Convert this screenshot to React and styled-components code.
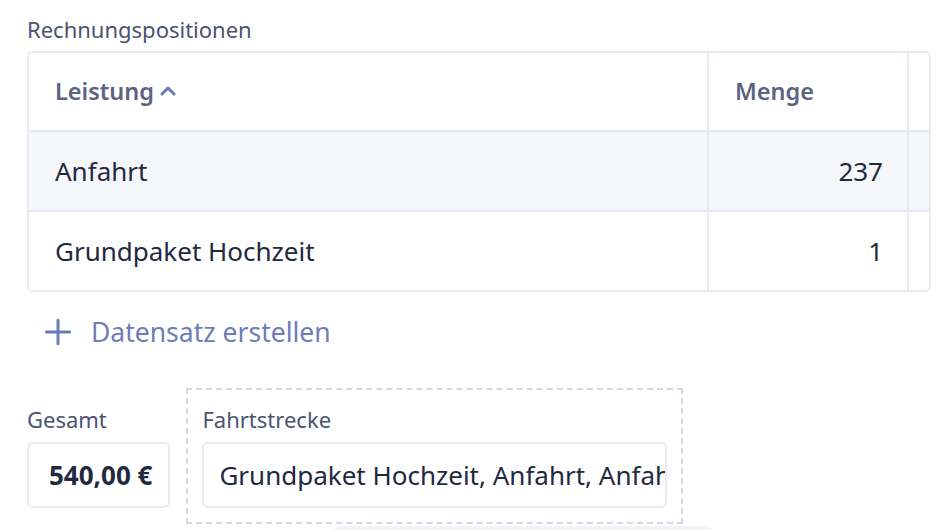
import React from 'react'
import styled, { createGlobalStyle } from 'styled-components'
import { Plus, ChevronUp } from 'lucide-react'

const GlobalStyle = createGlobalStyle`
    html, body {
        margin: 0;
        padding: 0;
        background: #ffffff;
    }
    body {
        font-family: "Noto Sans", "Open Sans", sans-serif;
        color: #1f2940;
        overflow: hidden;
    }
`

const Page = styled.div`
    padding: 14px 17px 0 27px;
    display: flex;
    flex-direction: column;
`

const FieldLabel = styled.div`
    font-size: 22px;
    line-height: 30px;
    color: #4b5371;
    margin-bottom: ${(p) => p.gap || 7}px;
`

const Table = styled.div`
    display: grid;
    grid-template-columns: 680px 200px 1fr;
    border: 2px solid #e8eaf3;
    border-radius: 6px;
    overflow: hidden;
`

const Cell = styled.div`
    box-sizing: border-box;
    height: ${(p) => (p.bottom ? 78 : 80)}px;
    display: flex;
    align-items: center;
    justify-content: ${(p) => (p.right ? 'flex-end' : 'flex-start')};
    padding: 0 24px 0 26px;
    font-size: 26px;
    color: #1f2940;
    background: ${(p) => (p.shaded ? '#f6f7fb' : '#ffffff')};
    border-right: ${(p) => (p.last ? 'none' : '2px solid #e8eaf3')};
    border-bottom: ${(p) => (p.bottom ? 'none' : '2px solid #e8eaf3')};
`

const HeadCell = styled(Cell)`
    height: 79px;
    font-size: 23.5px;
    font-weight: 600;
    color: #5b6380;
    gap: 2px;
    padding-bottom: 2px;
`

const SortIcon = styled(ChevronUp)`
    color: #6b7ab6;
    margin-top: 1px;
`

const AddButton = styled.button`
    align-self: flex-start;
    display: flex;
    align-items: center;
    gap: 13px;
    margin: 10px 0 0 11px;
    padding: 0;
    height: 60px;
    border: none;
    background: none;
    font-family: inherit;
    font-size: 26.5px;
    color: #6e7db8;
    cursor: pointer;
`

const FormRow = styled.div`
    display: flex;
    align-items: center;
    gap: 16px;
    margin-top: 26px;
`

const Field = styled.div`
    display: flex;
    flex-direction: column;
`

const DashedField = styled(Field)`
    border: 2px dashed #d3d7e5;
    padding: 14px;
    width: 465px;
`

const ValueBox = styled.div`
    height: 62px;
    border: 2px solid #e8eaf3;
    border-radius: 6px;
    display: flex;
    align-items: center;
    padding: 0 16px 0 ${(p) => p.pad || 20}px;
    font-size: 26px;
    font-weight: ${(p) => (p.bold ? 700 : 400)};
    color: #1f2940;
    white-space: nowrap;
    overflow: hidden;
    background: #fff;
`

const Shelf = styled.div`
    margin: 2px 0 0 306px;
    width: 380px;
    height: 16px;
    border-radius: 8px 8px 0 0;
    background: #f3f4f8;
`

export default function App() {
    return (
        <>
            <GlobalStyle />
            <Page>
                <FieldLabel>Rechnungspositionen</FieldLabel>
                <Table>
                    <HeadCell>
                        Leistung
                        <SortIcon size={24} strokeWidth={3} />
                    </HeadCell>
                    <HeadCell>Menge</HeadCell>
                    <HeadCell last />
                    <Cell shaded>Anfahrt</Cell>
                    <Cell shaded right>237</Cell>
                    <Cell shaded last />
                    <Cell bottom>Grundpaket Hochzeit</Cell>
                    <Cell bottom right>1</Cell>
                    <Cell bottom last />
                </Table>
                <AddButton>
                    <Plus size={40} strokeWidth={1.8} />
                    Datensatz erstellen
                </AddButton>
                <FormRow>
                    <Field>
                        <FieldLabel gap={8}>Gesamt</FieldLabel>
                        <ValueBox bold>540,00 €</ValueBox>
                    </Field>
                    <DashedField>
                        <FieldLabel gap={8}>Fahrtstrecke</FieldLabel>
                        <ValueBox pad={15}>Grundpaket Hochzeit, Anfahrt, Anfahrt</ValueBox>
                    </DashedField>
                </FormRow>
                <Shelf />
            </Page>
        </>
    )
}
